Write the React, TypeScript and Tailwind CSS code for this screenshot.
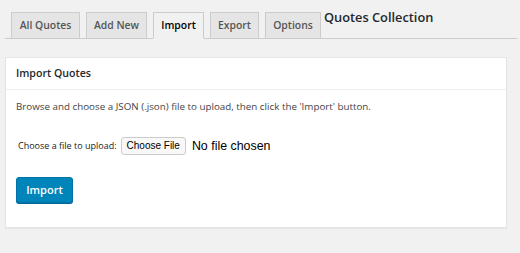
const tabs = [
  { label: "All Quotes", w: "w-[69px]" },
  { label: "Add New", w: "w-[61px]" },
  { label: "Import", w: "w-[51px]" },
  { label: "Export", w: "w-[49px]" },
  { label: "Options", w: "w-[56px]" },
];

export default function App() {
  return (
    <div className="w-[520px] h-[253px] bg-[#f1f1f1] pl-[5px] pr-[3px] overflow-hidden font-['Open_Sans',sans-serif]">
      <div className="flex items-end gap-[6px] border-b border-[#ccc] pl-[6px] pt-[12px] h-[39px]">
        {tabs.map((t) => (
          <div
            key={t.label}
            className={`${t.w} h-[27px] flex items-center justify-center border border-[#ccc] text-[10.4px] font-semibold -mb-px ${
              t.label === "Import"
                ? "bg-[#f1f1f1] border-b-[#f1f1f1] text-black"
                : "bg-[#e5e5e5] text-[#555]"
            }`}
          >
            {t.label}
          </div>
        ))}
        <h2 className="self-start -mt-[4px] -ml-[3px] text-[12.8px] font-semibold text-[#23282d]">
          Quotes Collection
        </h2>
      </div>
      <div className="mt-[18px] w-[502px] bg-white border border-[#e5e5e5] shadow-[0_1px_1px_rgba(0,0,0,0.04)]">
        <div className="h-[32px] flex items-center px-[10px] border-b border-[#eee] text-[10.6px] font-semibold text-[#23282d]">
          Import Quotes
        </div>
        <div className="px-[10px] pt-[10px] pb-[24px] text-[9.8px] text-[#444]">
          <p>Browse and choose a JSON (.json) file to upload, then click the 'Import' button.</p>
          <div className="mt-[22px] flex items-center pl-[2px]">
            <span className="text-[9px] text-[#222]">Choose a file to upload:</span>
            <button className="ml-[4px] h-[18px] px-[5px] rounded-[3px] border border-[#ccc] bg-[#f8f8f8] font-['Liberation_Sans',sans-serif] text-[10px] text-black">
              Choose File
            </button>
            <span className="ml-[6px] font-['Liberation_Sans',sans-serif] text-[12.4px] text-black">No file chosen</span>
          </div>
          <button className="mt-[22px] h-[26px] w-[57px] rounded-[3px] bg-[#0085ba] border border-[#0073aa] shadow-[0_1px_0_#006799] text-white text-[11px] font-semibold">
            Import
          </button>
        </div>
      </div>
    </div>
  );
}
